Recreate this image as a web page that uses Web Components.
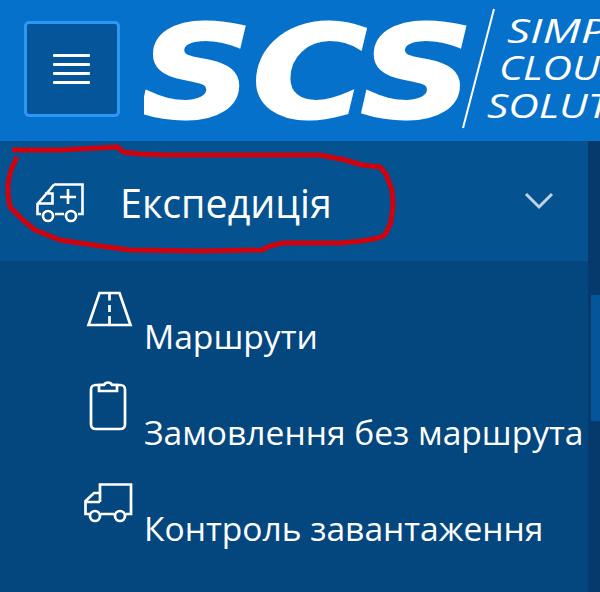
<!DOCTYPE html>
<html><head><meta charset="utf-8"><style>
html,body{margin:0;padding:0;width:600px;height:592px;overflow:hidden;background:#04477f}
</style></head><body>
<template id="t-app"><style>
:host{display:flex;flex-direction:column;width:600px;height:592px;overflow:hidden;position:relative;font-family:"Open Sans","Noto Sans",sans-serif;color:#fff}
.annot{position:absolute;left:0;top:140px;pointer-events:none}
</style>
<scs-header></scs-header>
<scs-sidebar></scs-sidebar>
<svg class="annot" width="420" height="120" viewBox="0 140 420 120"><path d="M12 150 L60 150 L118 147 L123 152 L140 154 L167 155 L320 155 L330 157 L345 160 L362 165 L380 167 L386 174 L392 190 L393 205 L391 222 L385 235 L378 238 L362 241 L340 243 L283 243 L270 246 L262 250 L200 251 L130 250 L100 246 L60 240 L35 230 L23 220 L10 207 L8 195 L8 183 L11 170 L17 157" fill="none" stroke="#d0020e" stroke-width="5" stroke-linejoin="round"/></svg>
</template>
<template id="t-header"><style>
:host{display:flex;flex:none;height:141px;background:#0671cb;box-sizing:border-box;align-items:flex-start;overflow:hidden}
button{flex:none;margin:21px 0 0 24px;width:96px;height:96px;box-sizing:border-box;background:#04559a;border:3px solid #2d97f5;border-radius:5px;padding:0;display:flex;align-items:center;justify-content:center}
svg.logo{flex:none;margin-left:24px}
</style>
<button aria-label="menu"><svg width="38" height="32" viewBox="0 0 38 32"><g fill="#fff"><rect y="1" width="37" height="3" rx="1"/><rect y="10" width="37" height="3" rx="1"/><rect y="19" width="37" height="3" rx="1"/><rect y="28" width="37" height="3" rx="1"/></g></svg></button>
<svg class="logo" width="456" height="141" viewBox="144 0 456 141">
<text x="140" y="117" font-family="DejaVu Sans,sans-serif" font-weight="700" font-style="italic" font-size="128" textLength="333" lengthAdjust="spacingAndGlyphs" fill="#fff" stroke="#fff" stroke-width="3" stroke-linejoin="miter">SCS</text>
<path d="M494 9 L463 128" stroke="#fff" stroke-width="2" fill="none"/>
<g font-family="Open Sans,sans-serif" font-style="italic" font-size="33" fill="#fff"><text x="507" y="43" textLength="145" lengthAdjust="spacingAndGlyphs">SIMPLE</text><text x="499" y="80" textLength="128" lengthAdjust="spacingAndGlyphs">CLOUD</text><text x="487" y="118" textLength="215" lengthAdjust="spacingAndGlyphs">SOLUTIONS</text></g>
</svg>
</template>
<template id="t-sidebar"><style>
:host{display:flex;flex:1;min-height:0}
.main{flex:1;min-width:0;background:#04477f;display:flex;flex-direction:column}
.list{padding-top:24px}
.bar{flex:none;width:12px;background:#063a6c;display:flex;flex-direction:column;align-items:flex-end}
.thumb{margin-top:154px;width:9px;height:126px;background:#04559a}
</style><div class="main">
<scs-group><svg slot="icon" width="50" height="44" viewBox="35 180 50 44" fill="none" stroke="#fff" stroke-width="2.6"><path d="M54 184.5H82.5V214H78M64 214H55M41 214H37.5V204L50 189.5M38 203.5H52.5V193.5H45M54 184.5L50 189.5"/><circle cx="48" cy="216" r="5"/><circle cx="71" cy="216" r="5"/><path d="M60 197H76M68 189V204"/></svg>Експедиція</scs-group>
<div class="list">
<scs-item><svg slot="icon" width="50" height="60" viewBox="0 0 50 60" fill="none" stroke="#fff" stroke-width="2.7"><path d="M15.5 8H35.5L46.5 40H4.5Z"/><path d="M25.5 9V15.5M25.5 20V27M25.5 31V39"/></svg>Маршрути</scs-item>
<scs-item><svg slot="icon" width="50" height="60" viewBox="0 0 50 60" fill="none" stroke="#fff" stroke-width="2.7"><rect x="7" y="4" width="34" height="44" rx="4.5"/><path d="M15 4V10H33V4H28C27 2 26 1.5 24 1.5C22 1.5 21 2 20 4Z" fill="#04477f"/></svg>Замовлення без маршрута</scs-item>
<scs-item><svg slot="icon" width="50" height="60" viewBox="0 0 50 60" fill="none" stroke="#fff" stroke-width="2.7"><path d="M16 25V7.5H47V37H42M30 37H17M5.5 37H1.5V24L10 16H16M1.5 25H16"/><circle cx="11" cy="39" r="5"/><circle cx="36" cy="39" r="5"/></svg>Контроль завантаження</scs-item>
</div></div><div class="bar"><div class="thumb"></div></div>
</template>
<template id="t-group"><style>
:host{display:flex;flex:none;align-items:center;height:120px;background:#04528f;font-size:39.4px;box-sizing:border-box;padding:3px 0 0 35px;white-space:nowrap}
.i{flex:none;width:85px;display:flex;margin-top:-1px}
.c{flex:1}
svg{margin-right:34px;flex:none;margin-top:-3px}
</style><span class="i"><slot name="icon"></slot></span><span class="c"><slot></slot></span>
<svg width="30" height="20" viewBox="0 0 30 20" fill="none" stroke="#c0d3e4" stroke-width="3"><path d="M2 3L15 16L28 3"/></svg>
</template>
<template id="t-item"><style>
:host{display:flex;align-items:flex-start;box-sizing:border-box;height:96px;padding-left:84px;font-size:33.6px;white-space:nowrap;line-height:44px}
.i{flex:none;width:60px;display:flex}
.x{padding-top:29px}
</style><span class="i"><slot name="icon"></slot></span><span class="x"><slot></slot></span></template>
<scs-app></scs-app>
<script>
function def(n,t){customElements.define(n,class extends HTMLElement{constructor(){super();this.attachShadow({mode:'open'}).appendChild(document.getElementById(t).content.cloneNode(true));}})}
def('scs-app','t-app');def('scs-header','t-header');def('scs-sidebar','t-sidebar');def('scs-group','t-group');def('scs-item','t-item');
</script>
</body></html>
